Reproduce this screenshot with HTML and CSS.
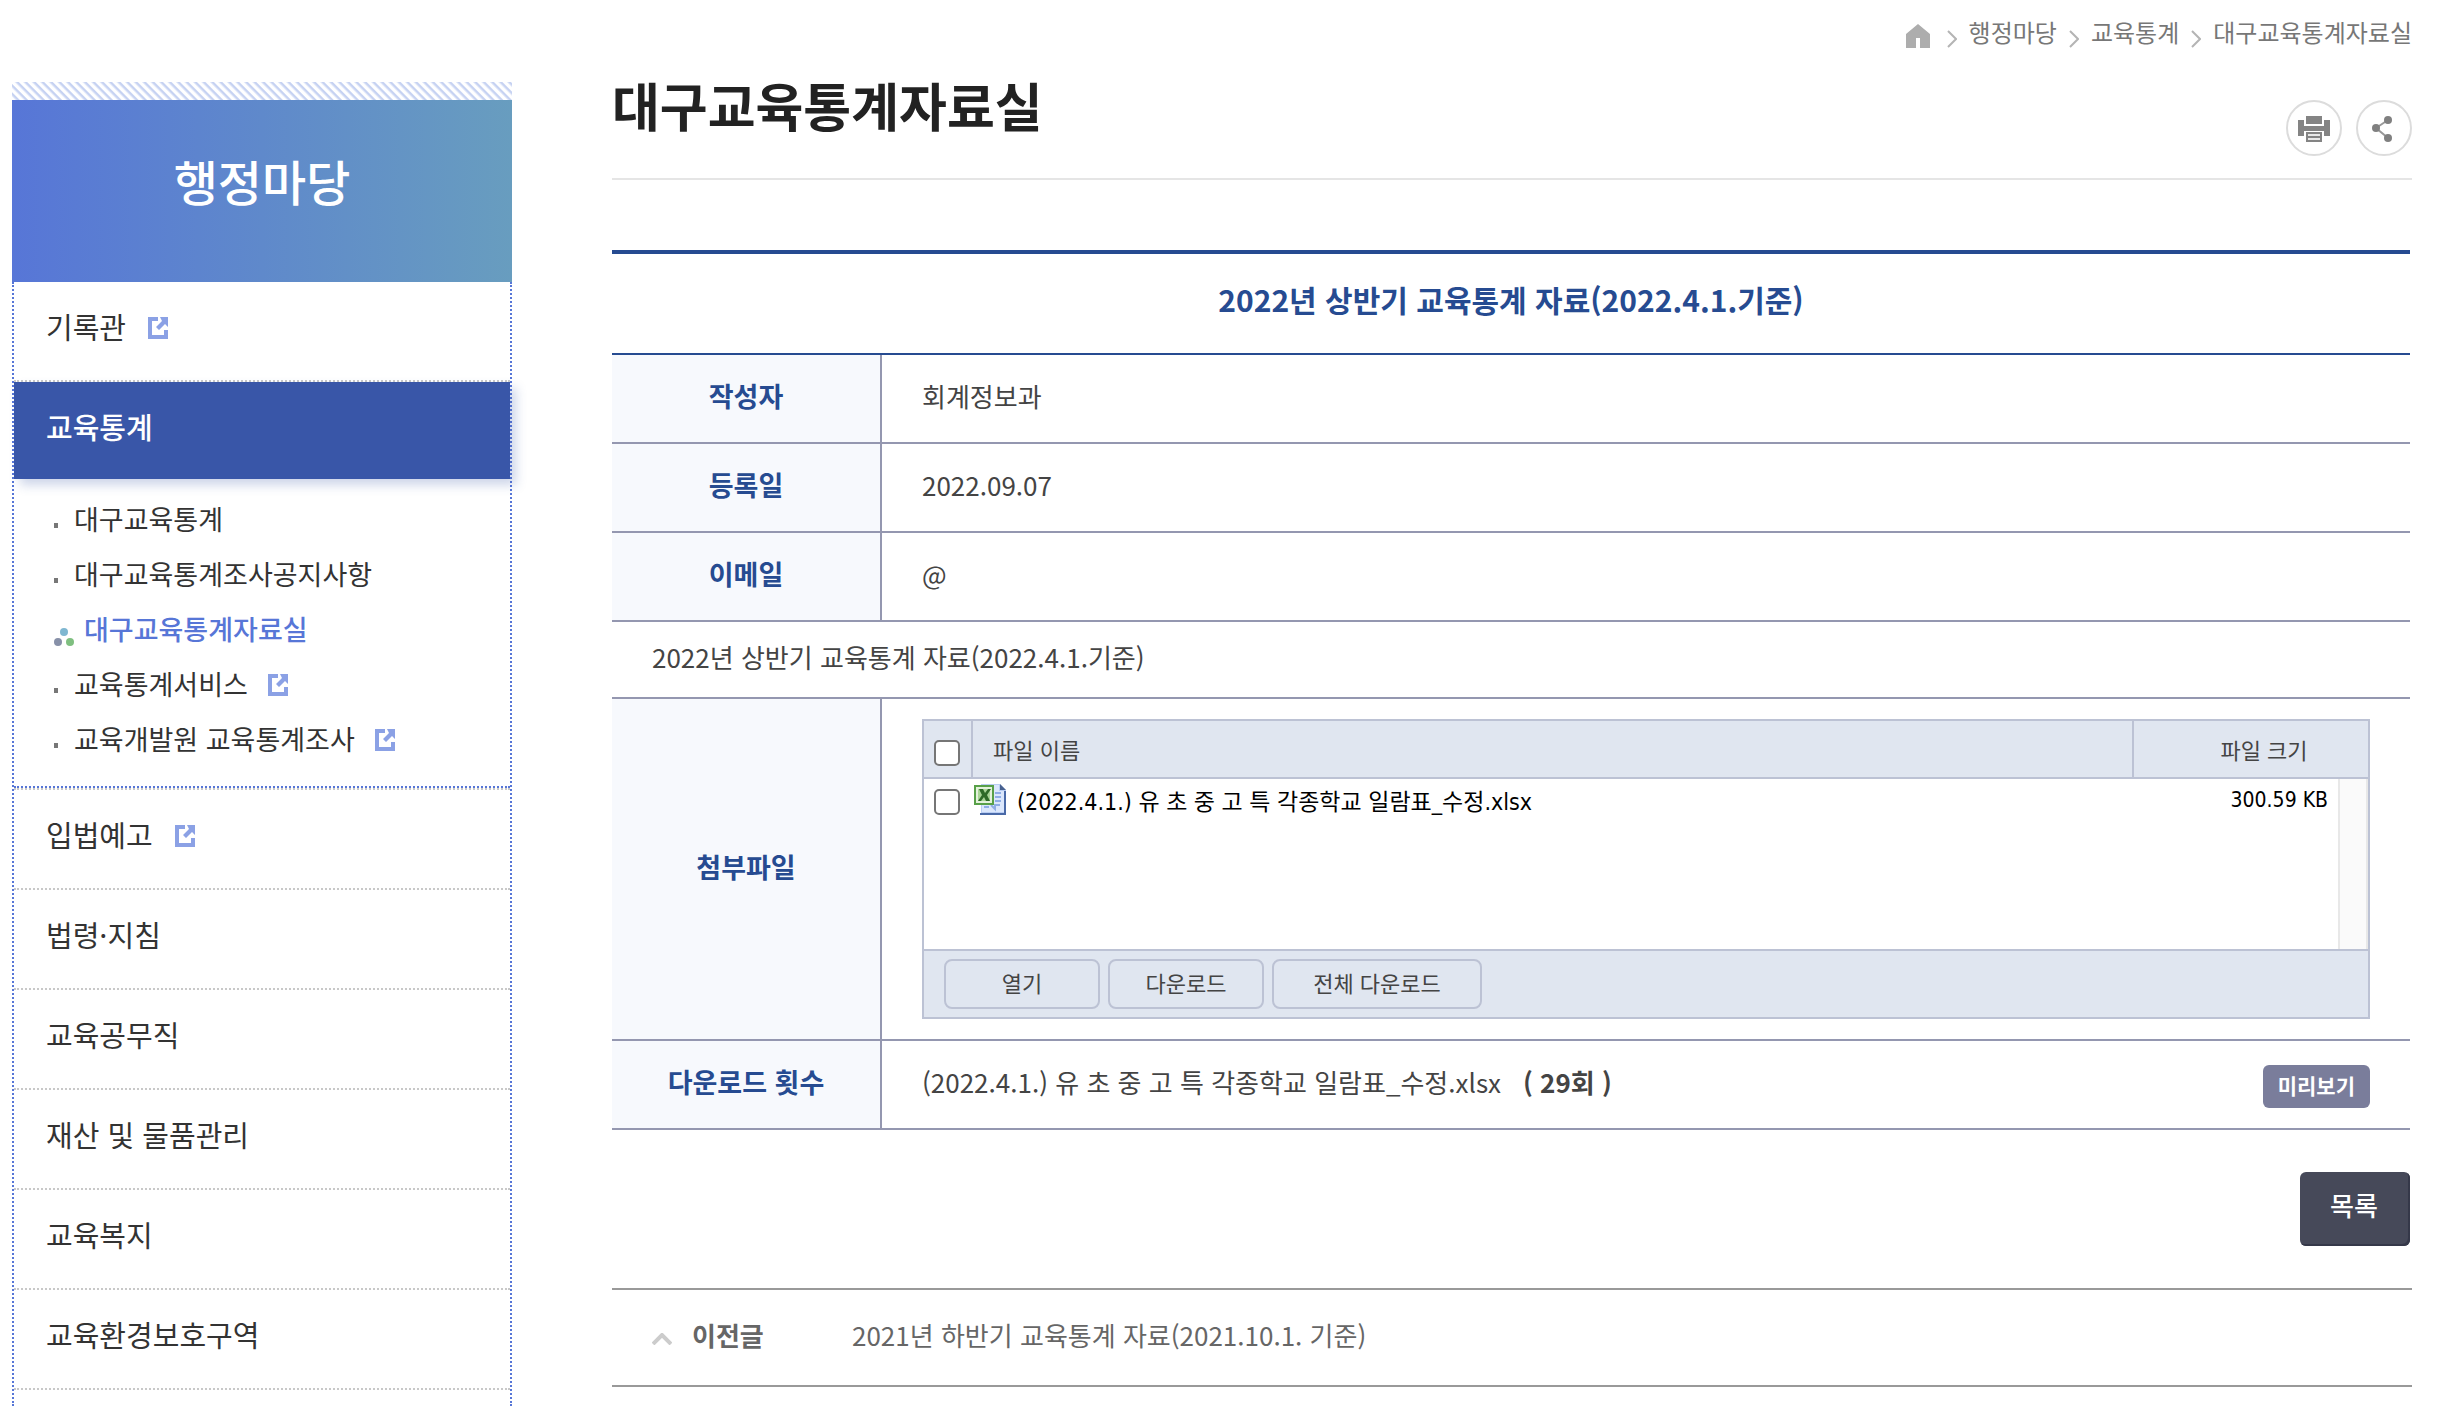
FILE: index.html
```html
<!DOCTYPE html>
<html lang="ko">
<head>
  <meta charset="UTF-8">
  <meta name="viewport" content="width=device-width, initial-scale=1.0">
  <title>대구교육통계자료실</title>
  <link rel="stylesheet" href="styles.css">
</head>
<body>
  <svg class="sprite" aria-hidden="true">
    <symbol id="icon-link" viewBox="0 0 20 22">
      <path d="M10 2H2v18h16v-7" fill="none" stroke="#8ba1e5" stroke-width="4"/>
      <path d="M12 0h8v10l-3-3-6 6-3-3 6-6z" fill="#8ba1e5"/>
    </symbol>
    <symbol id="icon-next" viewBox="0 0 10 18">
      <path d="M1 1l8 8-8 8" fill="none" stroke="#b4b4b4" stroke-width="2"/>
    </symbol>
  </svg>
  <div class="layout">
    <aside class="sidebar">
      <div class="stripe"></div>
      <h2 class="side-title">행정마당</h2>
      <ul class="menu">
        <li><a href="#">기록관 <svg class="icon-link"><use href="#icon-link"/></svg></a></li>
        <li class="active">
          <a href="#">교육통계</a>
          <ul class="submenu">
            <li><a href="#">대구교육통계</a></li>
            <li><a href="#">대구교육통계조사공지사항</a></li>
            <li class="on">
              <svg class="dots" viewBox="0 0 20 18">
                <circle cx="10" cy="4" r="4" fill="#7fb7d1"/>
                <circle cx="4" cy="14" r="4" fill="#8790a8"/>
                <circle cx="16" cy="14" r="4" fill="#7fbf80"/>
              </svg>
              <a href="#">대구교육통계자료실</a>
            </li>
            <li><a href="#">교육통계서비스 <svg class="icon-link"><use href="#icon-link"/></svg></a></li>
            <li><a href="#">교육개발원 교육통계조사 <svg class="icon-link"><use href="#icon-link"/></svg></a></li>
          </ul>
        </li>
        <li><a href="#">입법예고 <svg class="icon-link"><use href="#icon-link"/></svg></a></li>
        <li><a href="#">법령·지침</a></li>
        <li><a href="#">교육공무직</a></li>
        <li><a href="#">재산 및 물품관리</a></li>
        <li><a href="#">교육복지</a></li>
        <li><a href="#">교육환경보호구역</a></li>
      </ul>
    </aside>

    <main class="content">
      <nav class="breadcrumb">
        <a href="#" aria-label="홈">
          <svg class="icon-home" viewBox="0 0 24 24"><path d="M12 0l12 10v14H14V14h-4v10H0V10z" fill="#adadad"/></svg>
        </a>
        <svg class="icon-next"><use href="#icon-next"/></svg>
        <a href="#">행정마당</a>
        <svg class="icon-next"><use href="#icon-next"/></svg>
        <a href="#">교육통계</a>
        <svg class="icon-next"><use href="#icon-next"/></svg>
        <a href="#">대구교육통계자료실</a>
      </nav>

      <header class="page-header">
        <h1>대구교육통계자료실</h1>
        <div class="tools">
          <button type="button" aria-label="인쇄">
            <svg viewBox="0 0 56 56">
              <circle cx="28" cy="28" r="27" fill="#fff" stroke="#dcdcdc" stroke-width="2"/>
              <path d="M20 16h16v8H20zM12 20h6v6h20v-6h6v16h-6v-5H18v5h-6z" fill="#848484"/>
              <path d="M21 33h14v8H21zM21 37h14" fill="#e8e8e8" stroke="#848484" stroke-width="2"/>
            </svg>
          </button>
          <button type="button" aria-label="공유">
            <svg viewBox="0 0 56 56">
              <circle cx="28" cy="28" r="27" fill="#fff" stroke="#dcdcdc" stroke-width="2"/>
              <path d="M32 20L20 28l12 10" fill="none" stroke="#999" stroke-width="2"/>
              <circle cx="32" cy="20" r="4" fill="#808080"/>
              <circle cx="20" cy="28" r="4" fill="#808080"/>
              <circle cx="32" cy="38" r="4" fill="#808080"/>
            </svg>
          </button>
        </div>
      </header>

      <table class="view">
        <thead>
          <tr><th colspan="2" class="subject">2022년 상반기 교육통계 자료(2022.4.1.기준)</th></tr>
        </thead>
        <tbody>
          <tr><th scope="row">작성자</th><td>회계정보과</td></tr>
          <tr><th scope="row">등록일</th><td>2022.09.07</td></tr>
          <tr><th scope="row">이메일</th><td>@</td></tr>
          <tr><td colspan="2" class="body-text">2022년 상반기 교육통계 자료(2022.4.1.기준)</td></tr>
          <tr>
            <th scope="row">첨부파일</th>
            <td class="attach">
              <div class="file-box">
                <div class="file-list">
                  <table>
                    <thead>
                      <tr>
                        <th class="check"><input type="checkbox" aria-label="전체 선택"></th>
                        <th class="name">파일 이름</th>
                        <th class="size">파일 크기</th>
                      </tr>
                    </thead>
                    <tbody>
                      <tr>
                        <td class="check"><input type="checkbox" id="file1"></td>
                        <td class="name">
                          <label for="file1">
                            <svg class="icon-xls" viewBox="0 0 32 32">
                              <path d="M7 1h19l6 6v25H7z" fill="#b9cdf3"/>
                              <path d="M8 2h17v6h6v21H8z" fill="#dbe7fc"/>
                              <path d="M26 1l6 6h-6z" fill="#48618f"/>
                              <path d="M6 30h24V8h2v24H6z" fill="#4a6aa8"/>
                              <path d="M21 10h6M21 14h6M21 18h6M10 24h5M17 22l4 4v-4h5" fill="none" stroke="#8faee6" stroke-width="2"/>
                              <path d="M1 3h18v18H1z" fill="#e4f2dc" stroke="#58a048" stroke-width="2"/>
                              <path d="M4 6h12v12H4z" fill="#a9d596"/>
                              <path d="M5 6h4l2 4 3-4h3l-4 6 3 6h-4l-2-4-3 4H4l4-6z" fill="#2f6b27"/>
                            </svg>
                            (2022.4.1.) 유 초 중 고 특 각종학교 일람표_수정.xlsx
                          </label>
                        </td>
                        <td class="size">300.59 KB</td>
                      </tr>
                    </tbody>
                  </table>
                  <div class="scrollbar"></div>
                </div>
                <div class="file-buttons">
                  <button type="button">열기</button>
                  <button type="button">다운로드</button>
                  <button type="button" class="wide">전체 다운로드</button>
                </div>
              </div>
            </td>
          </tr>
          <tr>
            <th scope="row">다운로드 횟수</th>
            <td>
              <div class="count">
                <span>(2022.4.1.) 유 초 중 고 특 각종학교 일람표_수정.xlsx</span>
                <strong>( 29회 )</strong>
                <button type="button" class="preview">미리보기</button>
              </div>
            </td>
          </tr>
        </tbody>
      </table>

      <div class="actions">
        <button type="button" class="list-btn">목록</button>
      </div>

      <div class="prev">
        <svg class="icon-up" viewBox="0 0 20 12"><path d="M1 11l9-9 9 9" fill="none" stroke="#ccc" stroke-width="4"/></svg>
        <strong>이전글</strong>
        <a href="#">2021년 하반기 교육통계 자료(2021.10.1. 기준)</a>
      </div>
    </main>
  </div>
</body>
</html>
```

FILE: styles.css
```css
* {
  box-sizing: border-box;
}
body {
  margin: 0;
  background-color: #fff;
  color: #444;
  font-family: "Noto Sans CJK KR", sans-serif;
  font-size: 26px;
  line-height: 39px;
}
a {
  color: inherit;
  text-decoration: none;
}
ul {
  list-style: none;
  margin: 0;
  padding: 0;
}
button {
  font-family: inherit;
  cursor: pointer;
}
.sprite {
  display: none;
}
.layout {
  display: flex;
  gap: 100px;
  min-height: 100vh;
  padding: 0 30px 0 12px;
}

/* sidebar */
.sidebar {
  display: flex;
  flex-direction: column;
  flex: 0 0 500px;
  padding-top: 82px;
}
.stripe {
  height: 18px;
  background: repeating-linear-gradient(45deg, #fff 0, #fff 2px, #c6d2f2 4px, #c6d2f2 5px, #fff 6px);
}
.side-title {
  margin: 0;
  padding: 44px 0 66px;
  background: linear-gradient(90deg, #5776d7, #5f89cb 50%, #689dbf);
  color: #fff;
  font-size: 48px;
  font-weight: 500;
  line-height: 72px;
  text-align: center;
}
.menu {
  flex: 1;
  border: 2px dotted #5776d7;
  border-width: 0 2px;
}
.menu > li {
  border-bottom: 2px dotted #c8c8c8;
}
.menu > li > a {
  display: flex;
  align-items: center;
  gap: 22px;
  padding: 22px 32px 32px;
  color: #333;
  font-size: 29px;
  line-height: 44px;
}
.menu > .active > a {
  padding-bottom: 31px;
  background-color: #3956a8;
  box-shadow: 6px 6px 10px rgba(57, 86, 168, 0.25);
  color: #fff;
  font-weight: 500;
}
.icon-link {
  width: 20px;
  height: 22px;
  margin-top: 3px;
}
.submenu {
  padding: 12px 0 20px 40px;
  border-bottom: 2px dotted #5776d7;
}
.submenu li {
  display: flex;
  align-items: center;
  gap: 16px;
  color: #333;
  font-size: 27px;
  line-height: 55px;
}
.submenu li::before {
  content: "";
  width: 4px;
  height: 5px;
  margin-top: 14px;
  background-color: #777;
}
.submenu li a {
  display: flex;
  align-items: center;
  gap: 20px;
}
.submenu .on {
  gap: 10px;
  color: #5776d7;
  font-weight: 500;
}
.submenu .on::before {
  display: none;
}
.dots {
  width: 20px;
  height: 18px;
  margin-top: 16px;
}

/* content */
.content {
  flex: 1;
  min-width: 0;
}
.breadcrumb {
  display: flex;
  justify-content: flex-end;
  align-items: center;
  gap: 12px;
  height: 67px;
  color: #777;
  font-size: 24px;
  line-height: 36px;
}
.breadcrumb a {
  padding-bottom: 3px;
}
.icon-home {
  display: block;
  width: 24px;
  height: 24px;
  margin: 7px 5px 0 0;
}
.icon-next {
  width: 10px;
  height: 18px;
  margin-top: 10px;
}
.page-header {
  display: flex;
  justify-content: space-between;
  align-items: flex-end;
  margin-bottom: 70px;
  padding-bottom: 22px;
  border-bottom: 2px solid #e5e5e5;
}
.page-header h1 {
  margin: 0;
  padding-bottom: 13px;
  color: #222;
  font-size: 52px;
  line-height: 76px;
}
.tools {
  display: flex;
  gap: 14px;
}
.tools button {
  width: 56px;
  height: 56px;
  padding: 0;
  border: none;
  background: none;
}
.tools svg {
  display: block;
}

.view {
  width: calc(100% - 2px);
  border-spacing: 0;
  border-top: 4px solid #264b91;
}
.view > tbody > tr > th {
  width: 270px;
  padding: 21px 0 27px;
  border-right: 2px solid #9497b0;
  border-bottom: 2px solid #9497b0;
  background-color: #f7f9fd;
  color: #264b91;
  font-size: 27px;
}
.view > tbody > tr > td {
  padding: 21px 40px 27px;
  border-bottom: 2px solid #9497b0;
}
.view .subject {
  padding: 23px 0 31px;
  border-bottom: 2px solid #264b91;
  color: #264b91;
  font-size: 30px;
  line-height: 45px;
}
.view > tbody > tr > .body-text {
  padding: 15px 40px 21px;
}
.view > tbody > tr > .attach {
  padding: 20px 40px;
}

.file-box {
  border: 2px solid #bcc2d4;
  background-color: #e0e6f0;
}
.file-list {
  position: relative;
  min-height: 228px;
  background-color: #fff;
}
.file-list table {
  width: 100%;
  border-spacing: 0;
}
.file-list th {
  padding: 9px 20px;
  border-bottom: 2px solid #bcc2d4;
  background-color: #e0e6f0;
  font-size: 22px;
  font-weight: 400;
  line-height: 38px;
  text-align: left;
}
.file-list td {
  padding: 4px 0;
  color: #000;
  font-family: "DejaVu Sans Condensed", "Noto Sans CJK KR", sans-serif;
  font-size: 23px;
  line-height: 38px;
}
.file-list .check {
  width: 47px;
  padding: 8px 0 0 10px;
}
.file-list td.check {
  padding-top: 0;
}
.file-list th + th {
  border-left: 2px solid #bcc2d4;
}
.file-list th.size {
  width: 236px;
  padding-left: 46px;
  text-align: center;
}
.file-list td.size {
  padding: 2px 40px 6px 0;
  font-size: 21px;
  text-align: right;
}
.file-list input {
  display: block;
  appearance: none;
  width: 26px;
  height: 26px;
  margin: 0;
  border: 2px solid #767676;
  border-radius: 5px;
  background-color: #fff;
}
.file-list label {
  display: flex;
  align-items: center;
  gap: 11px;
  padding-left: 3px;
}
.icon-xls {
  width: 32px;
  height: 32px;
  margin-bottom: 6px;
}
.scrollbar {
  position: absolute;
  top: 58px;
  right: 0;
  bottom: 0;
  width: 30px;
  border: 2px solid #e8e8e8;
  border-width: 0 2px;
  background-color: #fafafa;
}
.file-buttons {
  display: flex;
  gap: 8px;
  padding: 8px 20px;
  border-top: 2px solid #bcc2d4;
}
.file-buttons button {
  width: 156px;
  height: 50px;
  padding: 0 0 4px;
  border: 2px solid #bcc2d4;
  border-radius: 8px;
  background-color: #e0e6f0;
  color: #444;
  font-size: 22px;
}
.file-buttons .wide {
  width: 210px;
}

.count {
  display: flex;
  align-items: center;
  gap: 22px;
}
.preview {
  height: 43px;
  margin: 3px 0 -7px auto;
  padding: 0 15px 4px;
  border: none;
  border-radius: 6px;
  background-color: #7a7d9b;
  color: #fff;
  font-size: 21px;
  font-weight: 700;
}
.actions {
  display: flex;
  justify-content: flex-end;
  padding: 42px 2px;
}
.list-btn {
  width: 110px;
  height: 74px;
  padding: 0 2px 10px 0;
  border: none;
  border-radius: 6px;
  background-color: #464959;
  box-shadow: inset -2px -2px #353849;
  color: #fff;
  font-size: 26px;
  font-weight: 500;
}
.prev {
  display: flex;
  align-items: center;
  padding: 25px 40px 31px;
  border: 2px solid #999;
  border-width: 2px 0;
  color: #666;
}
.prev strong {
  width: 160px;
}
.icon-up {
  width: 20px;
  height: 12px;
  margin: 8px 20px 0 0;
}
```
